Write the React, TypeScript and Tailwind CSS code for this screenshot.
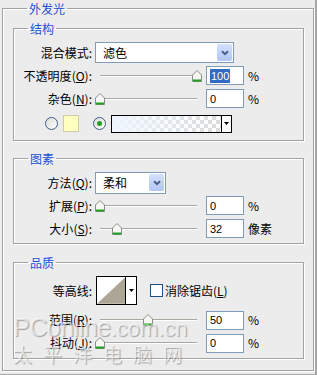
import React from 'react';

const cjk = "font-['Noto_Sans_CJK_SC','Noto_Sans',sans-serif]";
const latin = "font-['Liberation_Sans',Arial,sans-serif]";

function Group({ title, className, children }: { title: string; className: string; children: React.ReactNode }) {
  return (
    <fieldset className={`border border-[#a3a3a3] shadow-[1px_1px_0_#fff,inset_1px_1px_0_#fff] ${className}`}>
      <legend className={`ml-[14px] px-[2px] text-[12px] leading-[13px] text-[#1d4fd6] ${cjk}`}>{title}</legend>
      {children}
    </fieldset>
  );
}

function Label({ text, k }: { text: string; k?: string }) {
  return (
    <div className={`w-[78px] shrink-0 text-right text-[12px] leading-[14px] text-black whitespace-nowrap ${cjk}`}>
      {text}
      {k && (
        <>
          (<span className="underline underline-offset-1">{k}</span>)
        </>
      )}
      :
    </div>
  );
}

// pos = thumb centre, px from the start of the track
function Slider({ pos }: { pos: number }) {
  return (
    <div className="relative ml-[3px] w-[111px] h-[14px] shrink-0">
      <div className="absolute left-[5px] top-[6px] w-[97px] h-[2px] border-t border-[#a9a89e] bg-white" />
      <svg className="absolute top-[1px]" style={{ left: pos }} width="10" height="12" viewBox="0 0 10 12">
        <path d="M0.5 5 L5 0.5 L9.5 5 L9.5 11.5 L0.5 11.5 Z" fill="#f6f6f3" stroke="#8b8d8b" />
        <rect x="1" y="9.5" width="8" height="2" fill="#1fa21f" />
      </svg>
    </div>
  );
}

function NumBox({ value, selected }: { value: string; selected?: boolean }) {
  return (
    <div className={`w-[38px] h-[19px] shrink-0 border border-[#7f9db9] bg-white flex items-center pl-[3px] text-[11px] leading-[14px] text-black ${latin}`}>
      {selected ? <span className="bg-[#316ac5] text-white px-px">{value}</span> : value}
    </div>
  );
}

function Unit({ text }: { text: string }) {
  return <span className={`ml-[4px] text-[12px] leading-[14px] text-black ${cjk}`}>{text}</span>;
}

function DropButton() {
  return (
    <div className="w-[15px] h-[17px] rounded-[2px] bg-linear-to-b from-[#d4e0fd] to-[#b2c6f6] flex items-center justify-center">
      <svg width="8" height="6" viewBox="0 0 8 6">
        <path d="M1 1.2 L4 4.2 L7 1.2" fill="none" stroke="#4a5f86" strokeWidth="2" />
      </svg>
    </div>
  );
}

function Select({ value, className }: { value: string; className: string }) {
  return (
    <div className={`ml-[3px] border border-[#7f9db9] bg-white flex items-center justify-between pl-[7px] pr-px ${className}`}>
      <span className={`text-[12px] leading-[14px] text-black ${cjk}`}>{value}</span>
      <DropButton />
    </div>
  );
}

function Radio({ checked, className }: { checked?: boolean; className: string }) {
  return (
    <div className={`w-[13px] h-[13px] shrink-0 rounded-full border border-[#3c5f87] bg-linear-to-br from-[#dedcd5] to-white flex items-center justify-center ${className}`}>
      {checked && <div className="w-[5px] h-[5px] rounded-full bg-[#21a121]" />}
    </div>
  );
}

function MiniArrow() {
  return (
    <svg width="5" height="3" viewBox="0 0 5 3">
      <path d="M0 0 H5 L2.5 3 Z" fill="#000" />
    </svg>
  );
}

export default function App() {
  return (
    <div className="relative w-[317px] h-[375px] overflow-hidden bg-[#ececec] border-r-2 border-b border-[#a6a6a6]">
      <Group title="外发光" className="ml-[2px] mt-[2px] w-[312px] h-[369px] pl-[10px] flex flex-col">
        {/* 结构 */}
        <Group title="结构" className="mt-[7px] w-[291px] h-[119px] pt-[6px]">
          <div className="flex items-center h-[23px]">
            <Label text="混合模式" />
            <Select value="滤色" className="w-[139px] h-[21px]" />
          </div>
          <div className="flex items-center h-[23px]">
            <Label text="不透明度" k="O" />
            <Slider pos={97} />
            <NumBox value="100" selected />
            <Unit text="%" />
          </div>
          <div className="flex items-center h-[23px]">
            <Label text="杂色" k="N" />
            <Slider pos={0} />
            <NumBox value="0" />
            <Unit text="%" />
          </div>
          <div className="flex items-center h-[27px]">
            <Radio className="ml-[31px]" />
            <div className="ml-[5px] w-[16px] h-[17px] border border-[#cfcca6] bg-[#ffffbf]" />
            <Radio checked className="ml-[14px]" />
            <div className="ml-[5px] w-[121px] h-[18px] border border-black flex">
              <div className="flex-1 bg-[image:linear-gradient(to_right,#eef5fd,rgba(238,245,253,0)),repeating-conic-gradient(#dadada_0_25%,#ffffff_0_50%)] bg-[length:100%_100%,8px_8px]" />
              <div className="w-[10px] border-l border-black bg-white flex items-center justify-center">
                <MiniArrow />
              </div>
            </div>
          </div>
        </Group>

        {/* 图素 */}
        <Group title="图素" className="mt-[11px] w-[291px] h-[92px] pt-[6px]">
          <div className="flex items-center h-[23px]">
            <Label text="方法" k="Q" />
            <Select value="柔和" className="w-[71px] h-[22px]" />
          </div>
          <div className="flex items-center h-[23px]">
            <Label text="扩展" k="P" />
            <Slider pos={0} />
            <NumBox value="0" />
            <Unit text="%" />
          </div>
          <div className="flex items-center h-[23px]">
            <Label text="大小" k="S" />
            <Slider pos={17} />
            <NumBox value="32" />
            <Unit text="像素" />
          </div>
        </Group>

        {/* 品质 */}
        <Group title="品质" className="mt-[12px] w-[291px] h-[103px] pt-[5px]">
          <div className="flex items-center h-[33px]">
            <Label text="等高线" />
            <div className="ml-[4px] w-[41px] h-[29px] border border-black bg-white flex">
              <svg width="29" height="27" viewBox="0 0 29 27" className="block">
                <polygon points="0,27 29,0 29,27" fill="#aca696" />
              </svg>
              <div className="w-[11px] border-l border-black flex items-center justify-center">
                <MiniArrow />
              </div>
            </div>
            <div className="ml-[13px] w-[13px] h-[13px] border border-[#1c5180] bg-white" />
            <span className={`ml-[2px] text-[12px] leading-[14px] text-black ${cjk}`}>
              消除锯齿(<span className="underline underline-offset-1">L</span>)
            </span>
          </div>
          <div className="flex items-center h-[26px]">
            <Label text="范围" k="R" />
            <Slider pos={48} />
            <NumBox value="50" />
            <Unit text="%" />
          </div>
          <div className="flex items-center h-[20px]">
            <Label text="抖动" k="J" />
            <Slider pos={0} />
            <NumBox value="0" />
            <Unit text="%" />
          </div>
        </Group>
      </Group>

      {/* watermark */}
      <div className="pointer-events-none absolute left-[13px] top-[313px] text-white/60 [text-shadow:1px_1px_1px_rgba(0,0,0,0.3)]">
        <div className={`flex items-baseline leading-[28px] ${latin}`}>
          <span className="text-[25px] tracking-[-0.5px]">PConline</span>
          <span className="text-[22px]">.com.cn</span>
        </div>
        <div className={`text-[19px] leading-[22px] tracking-[11px] ${cjk}`}>太平洋电脑网</div>
      </div>
    </div>
  );
}
